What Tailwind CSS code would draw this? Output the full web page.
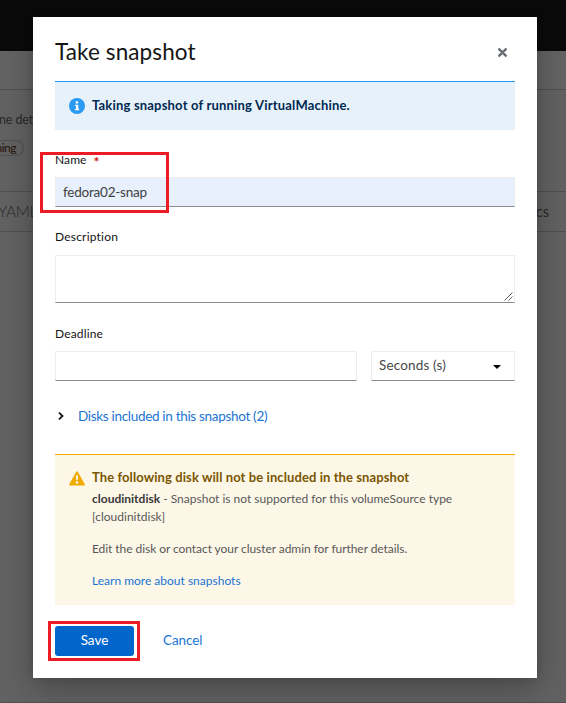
<!DOCTYPE html>
<html lang="en">
<head>
<meta charset="utf-8">
<title>Take snapshot</title>
<script src="https://cdn.jsdelivr.net/npm/@tailwindcss/browser@4"></script>
</head>
<body class="relative h-[703px] w-[566px] overflow-hidden bg-[#626262] font-['Lato',sans-serif] text-[#151515]">
<div class="flex h-full flex-col whitespace-nowrap text-[#292929]">
  <header class="h-[51px] shrink-0 bg-[#0a0a0a]"></header>
  <div class="h-[39px] shrink-0 border-b border-[#505050] bg-[#646464]"></div>
  <div class="flex h-[102px] shrink-0 flex-col border-b border-[#505050] pt-[21px]">
    <div class="-ml-px text-[12.5px] leading-[18px] tracking-[-0.1px]">ne details</div>
    <div class="mt-[11px] flex h-[16px] w-[24px] items-center justify-end rounded-r-full border border-l-0 border-[#505050] pr-[7px] text-[12px] leading-[14px] tracking-[-0.5px] text-[#24150c]">ning</div>
  </div>
  <div class="flex h-[40px] shrink-0 items-center justify-between border-b border-[#505050] pr-[17px]"><span class="-ml-[2px] text-[15.5px] font-light tracking-[-0.3px]">YAML</span><span class="text-[14.5px]">Diagnostics</span></div>
  <div class="grow border-b border-[#505050]"></div>
</div>

<main class="absolute left-[33px] top-[17px] flex h-[661px] w-[504px] flex-col bg-white px-[22px] whitespace-nowrap shadow-[0_10px_32px_rgba(3,3,3,0.28),0_0_8px_rgba(3,3,3,0.12)]">
  <div class="flex h-[64px] shrink-0 items-center justify-between pt-[5px] pr-[8px]">
    <h1 class="text-[22.5px] leading-[28px] tracking-[0.1px]">Take snapshot</h1>
    <svg class="mt-[2px] h-[9px] w-[9px]" viewBox="0 0 9 9" fill="none" stroke="#6a6e73" stroke-width="2.5" stroke-linecap="round"><path d="M1.3 1.3 7.7 7.7M7.7 1.3 1.3 7.7"/></svg>
  </div>
  <section class="flex h-[49px] shrink-0 items-center border-t border-[#2b9af3] bg-[#e7f1fa] pb-px pl-[14px]">
    <svg class="h-4 w-4" viewBox="0 0 16 16"><circle cx="8" cy="8" r="8" fill="#2b9af3"/><path fill="#fff" d="M6.7 3.3h2.4v2.3H6.7zM6 6.7h3.3v4.2h.9v1.4H6v-1.4h.9V8.1H6z"/></svg>
    <strong class="ml-[7px] text-[13px] font-bold tracking-[0.19px] text-[#002952]">Taking snapshot of running VirtualMachine.</strong>
  </section>
  <label class="mt-[21px] flex h-[18px] shrink-0 items-center text-[12px] tracking-[0.1px]">Name<span class="ml-[7px] pt-[3px] text-[14px] font-bold leading-[14px] text-[#c9190b]">*</span></label>
  <div class="mt-[8px] flex h-[30px] shrink-0 items-center border border-[#ededed] border-b-[#8a8d90] bg-[#e8f0fe] pl-[7px] text-[13.5px] tracking-[-0.22px] text-[#404040]">fedora02-snap</div>
  <label class="mt-[21px] h-[18px] shrink-0 text-[12px] leading-[18px] tracking-[0.2px]">Description</label>
  <div class="mt-[9px] flex h-[48px] shrink-0 items-end justify-end border border-[#ededed] border-b-[#8a8d90] p-px">
    <svg class="h-[9px] w-[9px]" viewBox="0 0 9 9" stroke="#555" stroke-width=".9"><path d="M.5 8.5 8.5.5M4.5 8.5l4-4"/></svg>
  </div>
  <label class="mt-[22px] h-[18px] shrink-0 text-[12px] leading-[18px] tracking-[0.15px]">Deadline</label>
  <div class="mt-[8px] flex h-[30px] shrink-0 gap-[14px]">
    <div class="w-[302px] border border-[#ededed] border-b-[#8a8d90]"></div>
    <div class="flex w-[144px] items-center justify-between border border-[#ededed] border-b-[#8a8d90] pr-[13px] pb-px pl-[7px] text-[13.5px] tracking-[0.15px] text-[#484848]">Seconds (s)
      <svg class="mt-[3px] h-[4px] w-[8px]" viewBox="0 0 8 4"><path d="M0 0h8L4 4z"/></svg>
    </div>
  </div>
  <div class="mt-[24px] flex h-[22px] shrink-0 items-center pl-[3px] text-[13.5px] text-[#1b74d4]">
    <svg class="h-[8px] w-[6px]" viewBox="0 0 6 8" fill="none" stroke="#151515" stroke-width="1.8"><path d="M1 .7 4.5 4 1 7.3"/></svg>
    <span class="ml-[14px] tracking-[-0.31px]">Disks included in this snapshot (2)</span>
  </div>
  <section class="mt-[27px] flex h-[151px] shrink-0 border-t border-[#f0ab00] bg-[#fdf7e7] pt-[14px] pl-[14px]">
    <svg class="mt-[2px] h-[15px] w-4 shrink-0" viewBox="0 0 16 15"><path d="M8 1.2 15 13.6H1z" fill="#f0ab00" stroke="#f0ab00" stroke-width="1.8" stroke-linejoin="round"/><path d="M7 4.6h2l-.3 4.7H7.3z" fill="#fff"/><circle cx="8" cy="11.5" r="1.2" fill="#fff"/></svg>
    <div class="ml-[7px] text-[12px] leading-[18px] text-[#585858]">
      <h2 class="-mt-px text-[13px] font-bold tracking-[0.09px] text-[#795600]">The following disk will not be included in the snapshot</h2>
      <p class="mt-[4px]"><b class="text-[#383838]">cloudinitdisk</b> - Snapshot is not supported for this volumeSource type<br>[cloudinitdisk]</p>
      <p class="mt-[14px] tracking-[-0.06px]">Edit the disk or contact your cluster admin for further details.</p>
      <p class="mt-[14px] text-[#1b74d4]">Learn more about snapshots</p>
    </div>
  </section>
  <footer class="mt-[21px] flex h-[30px] shrink-0 items-center text-[13.5px]">
    <button class="h-[30px] w-[79px] rounded-[3px] bg-[#06c] pb-[2px] text-white">Save</button>
    <button class="ml-[29px] pb-[2px] tracking-[-0.1px] text-[#1b74d4]">Cancel</button>
  </footer>
</main>
<div class="absolute left-[40px] top-[152px] h-[61px] w-[129px] border-3 border-[#ed1c24]"></div>
<div class="absolute left-[48px] top-[621px] h-[40px] w-[92px] border-3 border-[#ed1c24]"></div>
</body>
</html>
